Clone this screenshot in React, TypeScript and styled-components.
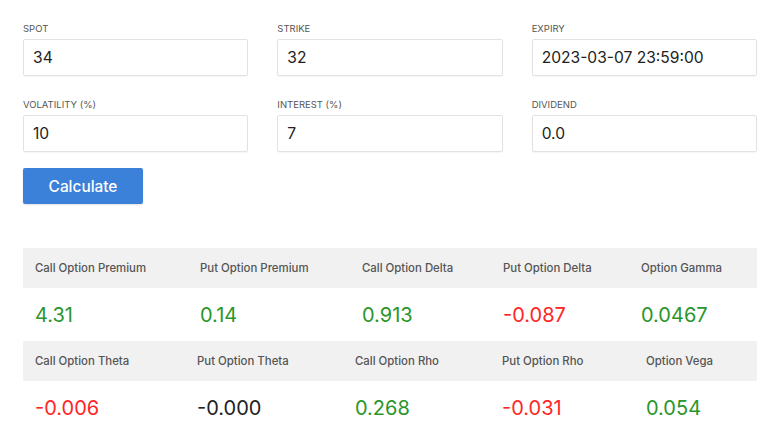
import styled, { createGlobalStyle } from 'styled-components';

const GlobalStyle = createGlobalStyle`
  body {
    margin: 0;
    background: #fff;
    font-family: Inter, "Noto Sans", sans-serif;
    color: #222;
  }
`;

interface Field {
  label: string;
  value: string;
}

interface Result {
  title: string;
  value: string;
  tone: 'up' | 'down' | 'flat';
}

const fields: Field[] = [
  { label: 'Spot', value: '34' },
  { label: 'Strike', value: '32' },
  { label: 'Expiry', value: '2023-03-07 23:59:00' },
  { label: 'Volatility (%)', value: '10' },
  { label: 'Interest (%)', value: '7' },
  { label: 'Dividend', value: '0.0' },
];

const resultTables: { columns: string; items: Result[] }[] = [
  {
    columns: '165px 162px 141px 138px 128px',
    items: [
      { title: 'Call Option Premium', value: '4.31', tone: 'up' },
      { title: 'Put Option Premium', value: '0.14', tone: 'up' },
      { title: 'Call Option Delta', value: '0.913', tone: 'up' },
      { title: 'Put Option Delta', value: '-0.087', tone: 'down' },
      { title: 'Option Gamma', value: '0.0467', tone: 'up' },
    ],
  },
  {
    columns: '162px 158px 147px 144px 123px',
    items: [
      { title: 'Call Option Theta', value: '-0.006', tone: 'down' },
      { title: 'Put Option Theta', value: '-0.000', tone: 'flat' },
      { title: 'Call Option Rho', value: '0.268', tone: 'up' },
      { title: 'Put Option Rho', value: '-0.031', tone: 'down' },
      { title: 'Option Vega', value: '0.054', tone: 'up' },
    ],
  },
];

const App = () => {
  return (
    <Page>
      <GlobalStyle />
      <FormGrid>
        {fields.map((f) => (
          <FieldBox key={f.label}>
            <Label>{f.label}</Label>
            <Input defaultValue={f.value} />
          </FieldBox>
        ))}
      </FormGrid>
      <CalcButton type="button">Calculate</CalcButton>

      <Results>
        {resultTables.map((t, i) => (
          <ResultTable key={i}>
            <HeadRow $columns={t.columns}>
              {t.items.map((r) => (
                <HeadCell key={r.title}>{r.title}</HeadCell>
              ))}
            </HeadRow>
            <ValueRow $columns={t.columns}>
              {t.items.map((r) => (
                <ValueCell key={r.title} $tone={r.tone}>
                  {r.value}
                </ValueCell>
              ))}
            </ValueRow>
          </ResultTable>
        ))}
      </Results>
    </Page>
  );
};

const Page = styled.main`
  width: 734px;
  padding: 23px 0 0 23px;
`;

const FormGrid = styled.section`
  display: grid;
  grid-template-columns: repeat(3, 1fr);
  column-gap: 29px;
  row-gap: 23px;
`;

const FieldBox = styled.div`
  display: flex;
  flex-direction: column;
  gap: 4px;
`;

const Label = styled.label`
  font-size: 9.5px;
  line-height: 12px;
  text-transform: uppercase;
  color: #555;
`;

const Input = styled.input`
  box-sizing: border-box;
  width: 100%;
  height: 37px;
  padding: 0 9px;
  font-family: inherit;
  font-size: 15.6px;
  color: #222;
  border: 1px solid #e2e2e2;
  border-radius: 2px;
  box-shadow: 0 1px 1px rgba(0, 0, 0, 0.04);
  outline: none;
`;

const CalcButton = styled.button`
  display: block;
  margin-top: 16px;
  width: 120px;
  height: 36px;
  border: none;
  border-radius: 2px;
  background: #3b80d9;
  color: #fff;
  font-family: inherit;
  font-size: 15.4px;
  font-weight: 500;
  box-shadow: 0 1px 2px rgba(0, 0, 0, 0.12);
`;

const Results = styled.section`
  margin-top: 44px;
`;

const ResultTable = styled.div`
  display: flex;
  flex-direction: column;
`;

const HeadRow = styled.div<{ $columns: string }>`
  display: grid;
  grid-template-columns: ${({ $columns }) => $columns};
  height: 40px;
  align-items: center;
  background: #f1f1f1;
`;

const ValueRow = styled.div<{ $columns: string }>`
  display: grid;
  grid-template-columns: ${({ $columns }) => $columns};
  height: 53px;
  align-items: center;
`;

const HeadCell = styled.div`
  padding-left: 12px;
  font-size: 11.4px;
  font-weight: 500;
  color: #555;
  white-space: nowrap;
`;

const toneColor = { up: '#2a962a', down: '#ff2525', flat: '#222' };

const ValueCell = styled.div<{ $tone: 'up' | 'down' | 'flat' }>`
  padding-left: 12px;
  font-size: 20px;
  color: ${({ $tone }) => toneColor[$tone]};
`;

export default App;
